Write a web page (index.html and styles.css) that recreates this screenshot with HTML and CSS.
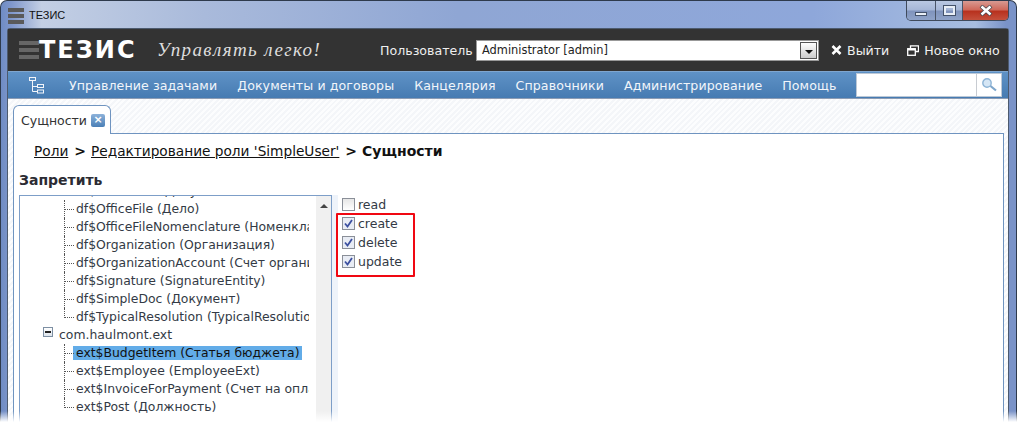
FILE: index.html
```html
<!DOCTYPE html>
<html lang="ru">
<head>
    <meta charset="UTF-8">
    <title>ТЕЗИС</title>
    <link rel="stylesheet" href="styles.css">
</head>
<body>
    <div class="window">
        <div class="titlebar">
            <svg class="app-icon" width="16" height="16" viewBox="0 0 16 16">
                <rect x="0" y="0" width="16" height="4" fill="#5a5a5a"/>
                <rect x="0" y="6" width="16" height="4" fill="#5a5a5a"/>
                <rect x="0" y="12" width="16" height="4" fill="#5a5a5a"/>
            </svg>
            <span class="title-text">ТЕЗИС</span>
            <div class="win-buttons">
                <div class="win-btn min"><span class="min-glyph"></span></div>
                <div class="win-btn max"><span class="max-glyph"></span></div>
                <div class="win-btn close">
                    <svg width="14" height="11" viewBox="0 0 14 11"><path d="M2 1 L12 10 M12 1 L2 10" stroke="#44464e" stroke-width="4"/><path d="M2.5 1.5 L11.5 9.5 M11.5 1.5 L2.5 9.5" stroke="#fff" stroke-width="2.6"/></svg>
                </div>
            </div>
        </div>

        <div class="app">
            <div class="header">
                <svg class="logo-bars" width="20" height="18" viewBox="0 0 20 18">
                    <rect y="0" width="20" height="4" fill="#666"/>
                    <rect y="7" width="20" height="4" fill="#666"/>
                    <rect y="14" width="20" height="4" fill="#666"/>
                </svg>
                <span class="logo-text">ТЕЗИС</span>
                <span class="slogan">Управлять легко!</span>
                <span class="user-label">Пользователь</span>
                <div class="user-select">
                    <span class="user-value">Administrator [admin]</span>
                    <span class="select-btn"><span class="select-arrow"></span></span>
                </div>
                <a class="head-link exit">
                    <svg width="11" height="10" viewBox="0 0 11 10"><path d="M1.5 1 L9.5 9 M9.5 1 L1.5 9" stroke="#fff" stroke-width="2.6"/></svg>
                    Выйти
                </a>
                <a class="head-link">
                    <svg width="12" height="11" viewBox="0 0 12 11" fill="none" stroke="#fff">
                        <path d="M3.5 3 V0.8 H11.5 V6.5 H8.5" stroke-width="1.3"/>
                        <rect x="0.7" y="3.7" width="7.6" height="6.6" stroke-width="1.3"/>
                        <path d="M1 4.5 H8" stroke-width="2"/>
                    </svg>
                    Новое окно
                </a>
            </div>

            <div class="nav">
                <svg class="tree-icon" width="15" height="17" viewBox="0 0 15 17" fill="none" stroke="#f2f5fa">
                    <rect x="0.5" y="0.5" width="6" height="3"/>
                    <path d="M3.5 4 V14.5 H9 M3.5 9.5 H9"/>
                    <rect x="8.5" y="7.5" width="6" height="3"/>
                    <rect x="8.5" y="13" width="6" height="3"/>
                </svg>
                <a class="nav-item">Управление задачами</a>
                <a class="nav-item">Документы и договоры</a>
                <a class="nav-item">Канцелярия</a>
                <a class="nav-item">Справочники</a>
                <a class="nav-item">Администрирование</a>
                <a class="nav-item">Помощь</a>
                <div class="search">
                    <span class="search-input"></span>
                    <span class="search-btn">
                        <svg width="17" height="16" viewBox="0 0 17 16" fill="none">
                            <circle cx="6" cy="6" r="4.2" fill="#d5e6f5" stroke="#8db4d6" stroke-width="1.4"/>
                            <path d="M9.5 9 L15 13.5" stroke="#7ea6cb" stroke-width="2.2"/>
                        </svg>
                    </span>
                </div>
            </div>

            <div class="workspace">
                <div class="tabs">
                    <div class="tab">
                        Сущности
                        <span class="tab-close">×</span>
                    </div>
                </div>
                <div class="panel">
                    <div class="crumbs">
                        <a>Роли</a><b class="sep">&gt;</b><a>Редактирование роли 'SimpleUser'</a><b class="sep">&gt;</b><b>Сущности</b>
                    </div>
                    <h2 class="section-title">Запретить</h2>
                    <div class="columns">
                        <div class="tree">
                            <div class="tree-body">
                                <div class="cut-row"><span>df$OfficeDoc (Документ)</span></div>
                                <div class="leaf"><span>df$OfficeFile (Дело)</span></div>
                                <div class="leaf"><span>df$OfficeFileNomenclature (Номенклатура)</span></div>
                                <div class="leaf"><span>df$Organization (Организация)</span></div>
                                <div class="leaf"><span>df$OrganizationAccount (Счет организации)</span></div>
                                <div class="leaf"><span>df$Signature (SignatureEntity)</span></div>
                                <div class="leaf"><span>df$SimpleDoc (Документ)</span></div>
                                <div class="leaf last"><span>df$TypicalResolution (TypicalResolution)</span></div>
                                <div class="group"><span class="toggle"></span>com.haulmont.ext</div>
                                <div class="leaf selected"><span>ext$BudgetItem (Статья бюджета)</span></div>
                                <div class="leaf"><span>ext$Employee (EmployeeExt)</span></div>
                                <div class="leaf"><span>ext$InvoiceForPayment (Счет на оплату)</span></div>
                                <div class="leaf last"><span>ext$Post (Должность)</span></div>
                            </div>
                            <div class="scrollbar"><span class="scroll-up"></span></div>
                        </div>
                        <div class="splitter"></div>
                        <div class="perms">
                            <label class="perm"><span class="check"></span>read</label>
                            <div class="perm-mark">
                                <label class="perm"><span class="check on"><svg width="9" height="9" viewBox="0 0 9 9"><path d="M1 4.5 L3.5 7.5 L8 1" fill="none" stroke="#3c50a0" stroke-width="1.8"/></svg></span>create</label>
                                <label class="perm"><span class="check on"><svg width="9" height="9" viewBox="0 0 9 9"><path d="M1 4.5 L3.5 7.5 L8 1" fill="none" stroke="#3c50a0" stroke-width="1.8"/></svg></span>delete</label>
                                <label class="perm"><span class="check on"><svg width="9" height="9" viewBox="0 0 9 9"><path d="M1 4.5 L3.5 7.5 L8 1" fill="none" stroke="#3c50a0" stroke-width="1.8"/></svg></span>update</label>
                            </div>
                        </div>
                    </div>
                </div>
            </div>
        </div>
    </div>
    <div class="bottom-fade"></div>
</body>
</html>
```

FILE: styles.css
```css
* {
    box-sizing: border-box;
}
html, body {
    margin: 0;
    height: 422px;
    overflow: hidden;
}
body {
    font-family: "DejaVu Sans", Verdana, sans-serif;
    font-size: 12.6px;
    color: #222;
    background: #fff;
    position: relative;
}
.window {
    width: 1017px;
    height: 440px;
    padding: 0 7px 0 6px;
    border: 1px solid #2e3a4c;
    border-bottom: 0;
    border-radius: 7px 7px 0 0;
    background: linear-gradient(90deg, #6f8cc4 0, #7f97cc 1%, #c3cfe4 4%, #a9badb 20%, #8fa6d4 45%, #8ea7da 80%, #a7bde0 96%, #7a93c8 99%);
    display: flex;
    flex-direction: column;
}
.titlebar {
    height: 27px;
    flex: none;
    display: flex;
    align-items: center;
    gap: 5px;
    margin: 0 0 0 1px;
    position: relative;
}
.app-icon {
    margin-top: 3px;
}
.title-text {
    font-family: "Liberation Sans", Arial, sans-serif;
    font-size: 11px;
    color: #111;
    margin-top: 1px;
}
.win-buttons {
    position: absolute;
    top: 0;
    right: 0;
    height: 20px;
    display: flex;
    border: 1px solid #3f4a5c;
    border-top: 0;
    border-radius: 0 0 5px 5px;
    overflow: hidden;
}
.win-btn {
    display: flex;
    align-items: center;
    justify-content: center;
    background: linear-gradient(#b9c8e2, #a5b6d6 48%, #7f93bc 52%, #8fa3c8);
    border-right: 1px solid #4a5568;
}
.win-btn.min {
    width: 29px;
}
.win-btn.max {
    width: 27px;
}
.win-btn.close {
    width: 45px;
    border-right: 0;
    background: linear-gradient(#d89a92, #cf6a5c 45%, #b8321f 55%, #c4503c);
}
.min-glyph {
    width: 12px;
    height: 4px;
    margin-top: 6px;
    background: #e8eef6;
    border: 1px solid #44526a;
}
.max-glyph {
    width: 11px;
    height: 9px;
    border: 2px solid #e8eef6;
    outline: 1px solid #44526a;
}

.app {
    flex: 1;
    border: 1px solid #4c5a6e;
    border-bottom: 0;
    border-radius: 3px 3px 0 0;
    display: flex;
    flex-direction: column;
    background: #fff;
}
.header {
    height: 42px;
    flex: none;
    background: #333;
    display: flex;
    align-items: center;
    padding: 0 0 0 11px;
    color: #fff;
}
.logo-bars {
    margin-right: 0;
}
.logo-text {
    font-family: "DejaVu Sans", sans-serif;
    font-weight: bold;
    font-size: 24px;
    line-height: 1;
    width: 99px;
    letter-spacing: 2px;
}
.slogan {
    font-family: "Liberation Serif", serif;
    font-style: italic;
    font-size: 19px;
    color: #ddd;
    width: 223px;
    margin-left: 19px;
    letter-spacing: 1.4px;
    white-space: nowrap;
}
.user-label {
    width: 96px;
    color: #eee;
}
.user-select {
    width: 343px;
    height: 21px;
    background: #fff;
    border: 1px solid #999;
    display: flex;
    align-items: center;
    justify-content: space-between;
    color: #222;
    font-size: 11.4px;
    padding: 0 1px 0 5px;
}
.select-btn {
    width: 17px;
    height: 17px;
    border: 1px solid #555;
    background: linear-gradient(#fff, #ccc);
    display: flex;
    align-items: center;
    justify-content: center;
}
.select-arrow {
    width: 0;
    height: 0;
    margin-top: 3px;
    border-left: 4px solid transparent;
    border-right: 4px solid transparent;
    border-top: 4px solid #111;
}
.head-link {
    display: flex;
    align-items: center;
    gap: 5px;
    color: #f0f0f0;
    margin-left: 12px;
    white-space: nowrap;
}
.head-link.exit {
    margin-right: 6px;
}

.nav {
    height: 28px;
    flex: none;
    background: linear-gradient(#5f92c6, #467bb2);
    border-top: 1px solid #7fa6cf;
    border-bottom: 1px solid #8c9cb4;
    display: flex;
    align-items: center;
    padding: 0 6px 0 21px;
    color: #f1f5fa;
}
.tree-icon {
    margin-right: 25px;
    flex: none;
}
.nav-item {
    margin-right: 20px;
    white-space: nowrap;
    letter-spacing: 0.08px;
}
.search {
    margin-left: auto;
    width: 146px;
    height: 24px;
    flex: none;
    display: flex;
    background: #fff;
    border: 1px solid #bcc8d6;
}
.search-input {
    flex: 1;
}
.search-btn {
    width: 25px;
    border-left: 1px solid #c8ccd2;
    display: flex;
    align-items: center;
    justify-content: center;
}

.workspace {
    flex: 1;
    background: repeating-linear-gradient(135deg, #f4f6f9 0 2px, #fcfdfe 2px 4px);
    padding: 6px 4px 0 5px;
    display: flex;
    flex-direction: column;
}
.tabs {
    height: 28px;
    flex: none;
    display: flex;
    position: relative;
    z-index: 1;
}
.tab {
    width: 98px;
    height: 29px;
    background: #fff;
    border: 1px solid #6f94c0;
    border-bottom: 0;
    border-radius: 6px 6px 0 0;
    display: flex;
    align-items: center;
    gap: 4px;
    padding: 0 0 0 7px;
    font-size: 12.5px;
    color: #333;
}
.tab-close {
    width: 14px;
    height: 13px;
    border-radius: 2px;
    background: linear-gradient(#8db2da, #4a7fb6);
    color: #fff;
    font-weight: bold;
    font-size: 11px;
    line-height: 12px;
    text-align: center;
}
.panel {
    flex: 1;
    background: #fff;
    border: 1px solid #6f94c0;
    border-bottom: 0;
    padding: 7px 0 0 5px;
}
.crumbs {
    padding-left: 15px;
    font-size: 13.7px;
    line-height: 20px;
    color: #111;
    display: flex;
    white-space: nowrap;
}
.crumbs b {
    font-size: 14px;
}
.crumbs a {
    text-decoration: underline;
}
.sep {
    margin: 0 5px 0 6px;
}
.section-title {
    margin: 10px 0 6px;
    font-size: 14px;
    line-height: 18px;
    font-weight: bold;
    color: #2b2b33;
}
.columns {
    display: flex;
}
.tree {
    width: 313px;
    height: 240px;
    border: 1px solid #7d9ec8;
    display: flex;
    flex: none;
    overflow: hidden;
}
.tree-body {
    width: 289px;
    flex: none;
    margin-right: 7px;
    padding-left: 44px;
    overflow: hidden;
    background: #fff;
}
.cut-row {
    height: 4px;
    overflow: hidden;
    margin-left: 12px;
    font-size: 12.4px;
    line-height: 18px;
    color: #333;
    white-space: nowrap;
}
.cut-row span {
    display: block;
    margin-top: -14px;
}
.leaf, .group {
    height: 18px;
    line-height: 18px;
    white-space: nowrap;
    font-size: 12.4px;
    color: #333a45;
}
.leaf {
    position: relative;
    padding-left: 12px;
    overflow: hidden;
}
.leaf::before {
    content: "";
    position: absolute;
    left: 1px;
    top: 9px;
    width: 9px;
    border-top: 1px dotted #555;
}
.leaf::after {
    content: "";
    position: absolute;
    left: 0;
    top: 0;
    bottom: 0;
    border-left: 1px dotted #555;
}
.leaf.last::after {
    bottom: 8px;
}
.group {
    display: flex;
    align-items: center;
    gap: 6px;
    margin-left: -21px;
}
.toggle {
    width: 10px;
    height: 10px;
    border: 1px solid #7d8fa3;
    background: linear-gradient(#fff, #dde4ec);
    position: relative;
    margin-top: -6px;
}
.toggle::after {
    content: "";
    position: absolute;
    left: 1px;
    right: 1px;
    top: 3px;
    border-top: 2px solid #222;
}
.leaf.selected span {
    background: #62ace8;
    color: #111;
    padding: 0 3px;
    margin-left: -3px;
    display: inline-block;
    line-height: 14px;
}
.scrollbar {
    width: 16px;
    flex: none;
    background: #f0f0f0;
    display: flex;
    justify-content: center;
    padding-top: 8px;
}
.scroll-up {
    width: 0;
    height: 0;
    border-left: 4px solid transparent;
    border-right: 4px solid transparent;
    border-bottom: 4px solid #444;
}
.splitter {
    width: 6px;
    flex: none;
    background: #eef3fa;
}
.perms {
    padding: 0 0 0 4px;
    font-size: 12.5px;
}
.perm {
    display: flex;
    align-items: center;
    gap: 3px;
    height: 19px;
    color: #333a45;
}
.perm-mark {
    border: 2px solid #f00812;
    margin: -1px 0 0 -6px;
    padding: 0 0 0 4px;
    width: 79px;
    height: 64px;
    border-radius: 1px;
}
.perm-mark .perm:first-child {
    margin-top: -1px;
}
.check {
    width: 13px;
    height: 13px;
    border: 1px solid #8a8f98;
    background: linear-gradient(#e6e6e6, #fff);
    display: flex;
    align-items: center;
    justify-content: center;
}
.check.on {
    background: #e8ecf4;
}
.bottom-fade {
    position: absolute;
    left: 0;
    right: 0;
    bottom: 0;
    height: 11px;
    background: linear-gradient(rgba(255,255,255,0), #fff);
}
```
